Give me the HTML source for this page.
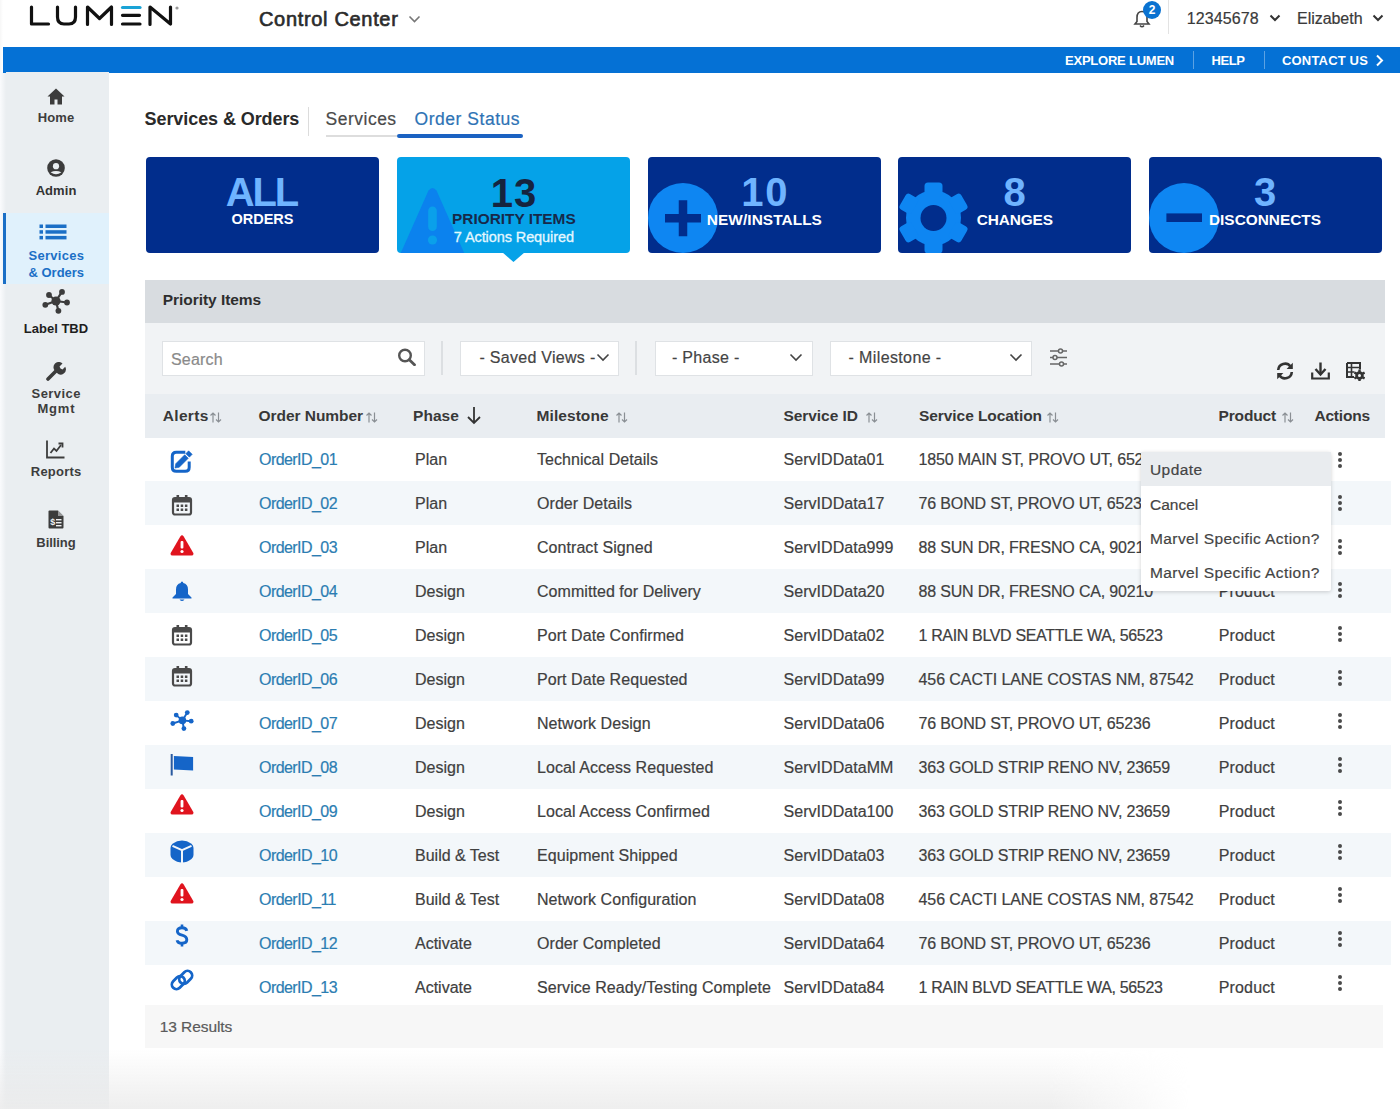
<!DOCTYPE html>
<html><head><meta charset="utf-8"><style>
html,body{margin:0;padding:0;}
body{width:1400px;height:1109px;overflow:hidden;position:relative;background:#fff;font-family:"Liberation Sans",sans-serif;}
.t{position:absolute;white-space:nowrap;line-height:1;-webkit-text-stroke:0.2px currentColor;}
.t.b{-webkit-text-stroke:0;}
.r{position:absolute;}
</style></head><body>
<div class="r" style="left:0.00px;top:0.00px;width:1400.00px;height:1109.00px;background:#ffffff;"></div>
<div class="r" style="left:0.00px;top:72.00px;width:6.00px;height:1037.00px;background:linear-gradient(90deg,#fafbfd,#eaeef1);"></div>
<div class="r" style="left:0.00px;top:0.00px;width:3.00px;height:72.00px;background:linear-gradient(90deg,#f7f7f7,#ffffff);"></div>
<svg class="r" style="left:0.00px;top:0.00px;" width="190.00" height="40.00" viewBox="0 0 190 40"><g fill="none" stroke="#111" stroke-width="3.2" stroke-linecap="round" stroke-linejoin="round">
<path d="M31.5 7 V24 H48.5"/>
<path d="M57.5 7 V17 Q57.5 24 64 24 H69 Q75.5 24 75.5 17 V7"/>
<path d="M87.5 24.5 V7 L99.5 18.5 L111.5 7 V24.5"/>
<path d="M122.5 15.3 H139.5 M122.5 24 H140"/>
<path d="M150 24.5 V7 L170.5 24 V7"/>
</g>
<path d="M122.5 7.5 H140" stroke="#1aa3d6" stroke-width="3.2" stroke-linecap="round"/>
<circle cx="177" cy="8" r="1.6" fill="#999"/></svg>
<div class="t" style="left:259.00px;top:9.47px;font-size:20.00px;letter-spacing:0.674px;color:#2b2b2b;-webkit-text-stroke:0.65px #2b2b2b;">Control Center</div>
<svg class="r" style="left:408.00px;top:15.00px;" width="13.00" height="9.00" viewBox="0 0 13 9"><path d="M1.5 1.5 L6.5 6.5 L11.5 1.5" fill="none" stroke="#777" stroke-width="1.6"/></svg>
<svg class="r" style="left:1132.00px;top:9.00px;" width="20.00" height="20.00" viewBox="0 0 20 20"><path d="M10 2.5 C6.5 2.5 5 5.5 5 8.5 V12.5 L3 15 H17 L15 12.5 V8.5 C15 5.5 13.5 2.5 10 2.5 Z" fill="none" stroke="#444" stroke-width="1.6"/><path d="M8 16.5 Q10 19 12 16.5" fill="none" stroke="#444" stroke-width="1.5"/></svg>
<div class="r" style="left:1143px;top:1px;width:18px;height:18px;border-radius:50%;background:#0a72d1;"></div>
<div class="t b" style="left:1148.66px;top:4.34px;font-size:12.00px;font-weight:bold;letter-spacing:0.000px;color:#fff;">2</div>
<div class="r" style="left:1167.50px;top:0.00px;width:1.00px;height:34.00px;background:#e3e3e3;"></div>
<div class="t" style="left:1186.80px;top:11.06px;font-size:16.00px;letter-spacing:0.101px;color:#3a3a3a;">12345678</div>
<svg class="r" style="left:1269.00px;top:14.00px;" width="12.00" height="9.00" viewBox="0 0 12 9"><path d="M1.5 1.5 L6 6 L10.5 1.5" fill="none" stroke="#333" stroke-width="2"/></svg>
<div class="t" style="left:1297.00px;top:11.06px;font-size:16.00px;letter-spacing:-0.036px;color:#3a3a3a;">Elizabeth</div>
<svg class="r" style="left:1372.00px;top:14.00px;" width="12.00" height="9.00" viewBox="0 0 12 9"><path d="M1.5 1.5 L6 6 L10.5 1.5" fill="none" stroke="#333" stroke-width="2"/></svg>
<div class="r" style="left:3.00px;top:46.50px;width:1397.00px;height:26.00px;background:#0571d5;"></div>
<div class="t b" style="left:1065.00px;top:54.40px;font-size:13.00px;font-weight:bold;letter-spacing:-0.227px;color:#ffffff;">EXPLORE LUMEN</div>
<div class="r" style="left:1193.00px;top:51.00px;width:1.00px;height:17.50px;background:rgba(255,255,255,0.35);"></div>
<div class="t b" style="left:1211.40px;top:54.40px;font-size:13.00px;font-weight:bold;letter-spacing:-0.368px;color:#ffffff;">HELP</div>
<div class="r" style="left:1264.00px;top:51.00px;width:1.00px;height:17.50px;background:rgba(255,255,255,0.35);"></div>
<div class="t b" style="left:1282.00px;top:54.40px;font-size:13.00px;font-weight:bold;letter-spacing:0.175px;color:#ffffff;">CONTACT US</div>
<svg class="r" style="left:1375.00px;top:54.00px;" width="9.00" height="13.00" viewBox="0 0 9 13"><path d="M2 1.5 L7 6.5 L2 11.5" fill="none" stroke="#fff" stroke-width="2"/></svg>
<div class="r" style="left:6.00px;top:72.00px;width:103.00px;height:1037.00px;background:#eaeef1;"></div>
<div class="r" style="left:3.00px;top:213.00px;width:106.00px;height:71.00px;background:#e0f1fc;"></div>
<div class="r" style="left:3.00px;top:213.00px;width:3.00px;height:71.00px;background:#1b6fc6;"></div>
<svg class="r" style="left:47.00px;top:88.00px;" width="18.00" height="17.00" viewBox="0 0 18 17"><path d="M9 0.5 L0.5 8.5 H3 V16.5 H7.5 V11.5 H10.5 V16.5 H15 V8.5 H17.5 Z" fill="#3c3c3c"/></svg>
<div class="t b" style="left:37.84px;top:111.00px;font-size:13.00px;font-weight:bold;letter-spacing:0.070px;color:#3d3d3d;">Home</div>
<svg class="r" style="left:47.00px;top:159.00px;" width="18.00" height="18.00" viewBox="0 0 18 18"><circle cx="9" cy="9" r="8.8" fill="#3c3c3c"/><circle cx="9" cy="7.2" r="3.1" fill="#eaeef1"/><path d="M3.6 13.2 Q9 17.2 14.4 13.2 Q9 10.8 3.6 13.2 Z" fill="#eaeef1"/></svg>
<div class="t b" style="left:35.68px;top:184.00px;font-size:13.00px;font-weight:bold;letter-spacing:0.052px;color:#333;">Admin</div>
<svg class="r" style="left:39.00px;top:224.00px;" width="28.00" height="16.00" viewBox="0 0 28 16"><g fill="#1b6fc6"><rect x="0.5" y="0.5" width="3.5" height="3.5"/><rect x="0.5" y="6.2" width="3.5" height="3.5"/><rect x="0.5" y="11.9" width="3.5" height="3.5"/><rect x="6.5" y="0.5" width="21" height="3.5"/><rect x="6.5" y="6.2" width="21" height="3.5"/><rect x="6.5" y="11.9" width="21" height="3.5"/></g></svg>
<div class="t b" style="left:28.54px;top:248.60px;font-size:13.00px;font-weight:bold;letter-spacing:0.288px;color:#1b6fc6;">Services</div>
<div class="t b" style="left:28.50px;top:265.70px;font-size:13.00px;font-weight:bold;letter-spacing:-0.004px;color:#1b6fc6;">&amp; Orders</div>
<svg class="r" style="left:42.00px;top:289.00px;" width="28.00" height="25.00" viewBox="0 0 28 25"><g stroke="#3c3c3c" stroke-width="2.2" fill="#3c3c3c"><line x1="14" y1="12" x2="7" y2="6"/><line x1="14" y1="12" x2="20" y2="2.7"/><line x1="14" y1="12" x2="3.3" y2="15.8"/><line x1="14" y1="12" x2="25" y2="13.5"/><line x1="14" y1="12" x2="16.4" y2="22"/></g><g fill="#3c3c3c"><circle cx="14" cy="12" r="4.6"/><circle cx="7" cy="6" r="2.9"/><circle cx="20" cy="2.9" r="2.9"/><circle cx="3.3" cy="15.8" r="2.9"/><circle cx="25" cy="13.5" r="2.9"/><circle cx="16.4" cy="21.8" r="2.9"/></g></svg>
<div class="t b" style="left:23.85px;top:322.00px;font-size:13.00px;font-weight:bold;letter-spacing:0.002px;color:#1e1e1e;">Label TBD</div>
<svg class="r" style="left:46.00px;top:362.00px;" width="20.00" height="19.00" viewBox="0 0 20 19"><path d="M2 17 L10.5 8.5" stroke="#3c3c3c" stroke-width="3.6" stroke-linecap="round"/><path d="M9 9 A5.2 5.2 0 0 1 16.5 1.5 L13.5 4.5 L14.5 6.5 L16.5 7.5 L19.2 4.8 A5.2 5.2 0 0 1 11 11 Z" fill="#3c3c3c"/></svg>
<div class="t b" style="left:31.61px;top:387.00px;font-size:13.00px;font-weight:bold;letter-spacing:0.420px;color:#3d3d3d;">Service</div>
<div class="t b" style="left:37.46px;top:402.00px;font-size:13.00px;font-weight:bold;letter-spacing:0.810px;color:#3d3d3d;">Mgmt</div>
<svg class="r" style="left:46.00px;top:440.00px;" width="19.00" height="19.00" viewBox="0 0 19 19"><path d="M1 0.5 V17.5 H18.5" fill="none" stroke="#3c3c3c" stroke-width="1.8"/><path d="M4.5 13 L8 8.5 L10.5 11 L15 5" fill="none" stroke="#3c3c3c" stroke-width="1.8"/><path d="M12.5 3.5 H16.5 V7.5" fill="none" stroke="#3c3c3c" stroke-width="1.8"/></svg>
<div class="t b" style="left:30.85px;top:465.00px;font-size:13.00px;font-weight:bold;letter-spacing:0.197px;color:#3d3d3d;">Reports</div>
<svg class="r" style="left:48.00px;top:510.00px;" width="16.00" height="19.00" viewBox="0 0 16 19"><path d="M0.5 1.5 Q0.5 0.5 1.5 0.5 H10 L15.5 6 V17.5 Q15.5 18.5 14.5 18.5 H1.5 Q0.5 18.5 0.5 17.5 Z" fill="#3c3c3c"/><path d="M10 0.5 V6 H15.5" fill="#eef0f2" opacity="0.5"/><text x="4.8" y="14.5" font-size="9" font-weight="bold" fill="#eef0f2" font-family="Liberation Sans" text-anchor="middle">$</text><rect x="8" y="9" width="5.5" height="1.4" fill="#eef0f2"/><rect x="8" y="12" width="5.5" height="1.4" fill="#eef0f2"/><rect x="8" y="15" width="5.5" height="1.4" fill="#eef0f2"/></svg>
<div class="t b" style="left:36.36px;top:535.60px;font-size:13.00px;font-weight:bold;letter-spacing:-0.074px;color:#3d3d3d;">Billing</div>
<div class="t b" style="left:144.60px;top:110.26px;font-size:18.00px;font-weight:bold;letter-spacing:-0.082px;color:#2a2a2a;">Services &amp; Orders</div>
<div class="r" style="left:307.50px;top:107.00px;width:1.00px;height:29.00px;background:#dcdcdc;"></div>
<div class="t" style="left:325.60px;top:110.69px;font-size:17.50px;letter-spacing:0.487px;color:#4a4a4a;">Services</div>
<div class="t" style="left:414.60px;top:110.69px;font-size:17.50px;letter-spacing:0.524px;color:#2d73b5;">Order Status</div>
<div class="r" style="left:325.50px;top:134.50px;width:71.50px;height:2.50px;background:#dddddd;"></div>
<div class="r" style="left:397.00px;top:134.00px;width:125.50px;height:3.50px;background:#1b62c2;border-radius:2px;"></div>
<div class="r" style="left:146px;top:157px;width:233px;height:96px;border-radius:4px;background:#012d8c;overflow:hidden;">
</div>
<div class="t b" style="left:225.74px;top:172.14px;font-size:40.00px;font-weight:bold;letter-spacing:-2.119px;color:#6fb4ff;">ALL</div>
<div class="t b" style="left:231.50px;top:211.93px;font-size:14.50px;font-weight:bold;letter-spacing:-0.006px;color:#ffffff;">ORDERS</div>
<div class="r" style="left:397px;top:157px;width:233px;height:96px;border-radius:4px;background:#05a2e8;overflow:hidden;">
<svg style="position:absolute;left:0;top:30px" width="72" height="70" viewBox="0 0 72 70"><path d="M31.5 3.5 Q35.5 -1.5 39.5 3.5 L69 70 H2 Z" fill="#0b82ee"/><rect x="31.2" y="19.5" width="8.6" height="24.5" rx="4.3" fill="#0aa0ea"/><circle cx="35.5" cy="53" r="4.6" fill="#0aa0ea"/></svg>
</div>
<svg class="r" style="left:502.00px;top:252.00px;" width="23.00" height="10.00" viewBox="0 0 23 10"><path d="M0 0 H23 L11.5 10 Z" fill="#05a2e8"/></svg>
<div class="t b" style="left:490.63px;top:173.14px;font-size:40.00px;font-weight:bold;letter-spacing:1.253px;color:#16243f;">13</div>
<div class="t b" style="left:452.05px;top:210.96px;font-size:15.40px;font-weight:bold;letter-spacing:-0.006px;color:#17294a;">PRIORITY ITEMS</div>
<div class="t" style="left:453.85px;top:230.23px;font-size:14.50px;letter-spacing:-0.095px;color:#e4f7ff;-webkit-text-stroke:0.3px #e4f7ff;">7 Actions Required</div>
<div class="r" style="left:648px;top:157px;width:233px;height:96px;border-radius:4px;background:#012d8c;overflow:hidden;">
<svg style="position:absolute;left:0;top:0" width="80" height="96" viewBox="0 0 80 96"><circle cx="35" cy="61" r="35" fill="#0e86f2"/><rect x="17" y="57" width="36" height="8.5" fill="#012d8c"/><rect x="30.75" y="43.25" width="8.5" height="36" fill="#012d8c"/></svg>
</div>
<div class="t b" style="left:741.18px;top:172.14px;font-size:40.00px;font-weight:bold;letter-spacing:1.753px;color:#6fb4ff;">10</div>
<div class="t b" style="left:706.84px;top:211.56px;font-size:15.40px;font-weight:bold;letter-spacing:0.071px;color:#ffffff;">NEW/INSTALLS</div>
<div class="r" style="left:898px;top:157px;width:233px;height:96px;border-radius:4px;background:#012d8c;overflow:hidden;">
<svg style="position:absolute;left:0;top:0" width="80" height="96" viewBox="0 0 80 96"><g fill="#0e86f2"><circle cx="35.5" cy="61" r="27.5"/><rect x="26.50" y="25.50" width="18" height="14" rx="3.5" transform="rotate(0 35.50 61.00)"/><rect x="26.50" y="25.50" width="18" height="14" rx="3.5" transform="rotate(60 35.50 61.00)"/><rect x="26.50" y="25.50" width="18" height="14" rx="3.5" transform="rotate(120 35.50 61.00)"/><rect x="26.50" y="25.50" width="18" height="14" rx="3.5" transform="rotate(180 35.50 61.00)"/><rect x="26.50" y="25.50" width="18" height="14" rx="3.5" transform="rotate(240 35.50 61.00)"/><rect x="26.50" y="25.50" width="18" height="14" rx="3.5" transform="rotate(300 35.50 61.00)"/></g><circle cx="35.5" cy="61" r="13" fill="#012d8c"/></svg>
</div>
<div class="t b" style="left:1003.48px;top:172.14px;font-size:40.00px;font-weight:bold;letter-spacing:0.000px;color:#6fb4ff;">8</div>
<div class="t b" style="left:976.74px;top:211.56px;font-size:15.40px;font-weight:bold;letter-spacing:-0.116px;color:#ffffff;">CHANGES</div>
<div class="r" style="left:1149px;top:157px;width:233px;height:96px;border-radius:4px;background:#012d8c;overflow:hidden;">
<svg style="position:absolute;left:0;top:0" width="80" height="96" viewBox="0 0 80 96"><circle cx="35" cy="61" r="35" fill="#0e86f2"/><rect x="17.4" y="56.4" width="35.6" height="8.6" fill="#012d8c"/></svg>
</div>
<div class="t b" style="left:1254.08px;top:172.14px;font-size:40.00px;font-weight:bold;letter-spacing:0.000px;color:#6fb4ff;">3</div>
<div class="t b" style="left:1209.00px;top:211.96px;font-size:15.40px;font-weight:bold;letter-spacing:-0.008px;color:#ffffff;">DISCONNECTS</div>
<div class="r" style="left:144.50px;top:280.00px;width:1240.00px;height:43.00px;background:#d8dce0;"></div>
<div class="t b" style="left:162.70px;top:292.38px;font-size:15.50px;font-weight:bold;letter-spacing:-0.040px;color:#2e2e2e;font-weight:600;">Priority Items</div>
<div class="r" style="left:144.50px;top:323.00px;width:1240.00px;height:71.00px;background:#f1f3f5;"></div>
<div class="r" style="left:161.50px;top:340.50px;width:263.50px;height:35.50px;background:#ffffff;box-sizing:border-box;border:1px solid #dfe2e5;"></div>
<div class="t" style="left:170.90px;top:352.46px;font-size:16.00px;letter-spacing:0.217px;color:#8a8a8a;">Search</div>
<svg class="r" style="left:397.00px;top:348.00px;" width="20.00" height="18.00" viewBox="0 0 20 18"><circle cx="8" cy="7.5" r="5.8" fill="none" stroke="#555" stroke-width="2.4"/><path d="M12.3 11.8 L17.5 16.8" stroke="#555" stroke-width="2.8" stroke-linecap="round"/></svg>
<div class="r" style="left:441.00px;top:341.00px;width:1.50px;height:34.00px;background:#dcdfe2;"></div>
<div class="r" style="left:460.00px;top:340.50px;width:159.00px;height:35.00px;background:#ffffff;box-sizing:border-box;border:1px solid #dfe2e5;"></div>
<div class="t" style="left:479.50px;top:349.96px;font-size:16.00px;letter-spacing:0.283px;color:#444;">- Saved Views -</div>
<svg class="r" style="left:595.50px;top:353.00px;" width="14.00" height="9.00" viewBox="0 0 14 9"><path d="M1.5 1.5 L7 7 L12.5 1.5" fill="none" stroke="#444" stroke-width="1.6"/></svg>
<div class="r" style="left:635.00px;top:341.00px;width:1.50px;height:34.00px;background:#dcdfe2;"></div>
<div class="r" style="left:654.50px;top:340.50px;width:158.00px;height:35.00px;background:#ffffff;box-sizing:border-box;border:1px solid #dfe2e5;"></div>
<div class="t" style="left:672.00px;top:349.96px;font-size:16.00px;letter-spacing:0.287px;color:#444;">- Phase -</div>
<svg class="r" style="left:789.00px;top:353.00px;" width="14.00" height="9.00" viewBox="0 0 14 9"><path d="M1.5 1.5 L7 7 L12.5 1.5" fill="none" stroke="#444" stroke-width="1.6"/></svg>
<div class="r" style="left:830.00px;top:340.50px;width:202.00px;height:35.00px;background:#ffffff;box-sizing:border-box;border:1px solid #dfe2e5;"></div>
<div class="t" style="left:848.50px;top:349.96px;font-size:16.00px;letter-spacing:0.383px;color:#444;">- Milestone -</div>
<svg class="r" style="left:1008.70px;top:353.00px;" width="14.00" height="9.00" viewBox="0 0 14 9"><path d="M1.5 1.5 L7 7 L12.5 1.5" fill="none" stroke="#444" stroke-width="1.6"/></svg>
<svg class="r" style="left:1049.00px;top:348.00px;" width="19.00" height="19.00" viewBox="0 0 19 19"><g stroke="#666" stroke-width="1.5" fill="none"><line x1="1" y1="3" x2="18" y2="3"/><line x1="1" y1="9.5" x2="18" y2="9.5"/><line x1="1" y1="16" x2="18" y2="16"/></g><g fill="#f1f3f5" stroke="#666" stroke-width="1.5"><circle cx="11.5" cy="3" r="2"/><circle cx="6" cy="9.5" r="2"/><circle cx="12.5" cy="16" r="2"/></g></svg>
<svg class="r" style="left:1275.00px;top:362.00px;" width="20.00" height="18.00" viewBox="0 0 20 18"><path d="M3.2 8 A6.8 6.8 0 0 1 15.5 4.5" fill="none" stroke="#333" stroke-width="2.6"/><path d="M17.8 0.8 V7 H11.6 Z" fill="#333"/><path d="M16.8 10 A6.8 6.8 0 0 1 4.5 13.5" fill="none" stroke="#333" stroke-width="2.6"/><path d="M2.2 17.2 V11 H8.4 Z" fill="#333"/></svg>
<svg class="r" style="left:1311.00px;top:362.00px;" width="19.00" height="18.00" viewBox="0 0 19 18"><path d="M9.5 0.5 V11" stroke="#333" stroke-width="2.4"/><path d="M4.5 7 L9.5 12.5 L14.5 7" fill="none" stroke="#333" stroke-width="2.4"/><path d="M1.2 10.5 V16.5 H17.8 V10.5" fill="none" stroke="#333" stroke-width="2.2"/></svg>
<svg class="r" style="left:1346.00px;top:362.00px;" width="19.00" height="19.00" viewBox="0 0 19 19"><path d="M1 1 H14 V7.5 M1 1 V15 H8" fill="none" stroke="#333" stroke-width="2"/><path d="M1 5.5 H14 M1 10 H8.5 M5.5 1 V15" stroke="#333" stroke-width="1.6"/><g fill="#333"><circle cx="13.5" cy="13.5" r="4.2"/><rect x="12.3" y="7.6" width="2.4" height="3" transform="rotate(0 13.5 13.5)"/><rect x="12.3" y="7.6" width="2.4" height="3" transform="rotate(60 13.5 13.5)"/><rect x="12.3" y="7.6" width="2.4" height="3" transform="rotate(120 13.5 13.5)"/><rect x="12.3" y="7.6" width="2.4" height="3" transform="rotate(180 13.5 13.5)"/><rect x="12.3" y="7.6" width="2.4" height="3" transform="rotate(240 13.5 13.5)"/><rect x="12.3" y="7.6" width="2.4" height="3" transform="rotate(300 13.5 13.5)"/></g><circle cx="13.5" cy="13.5" r="1.5" fill="#f1f3f5"/></svg>
<div class="r" style="left:144.50px;top:394.00px;width:1240.00px;height:43.50px;background:#e9edf1;"></div>
<div class="t b" style="left:162.70px;top:407.88px;font-size:15.50px;font-weight:bold;letter-spacing:0.344px;color:#383838;font-weight:600;">Alerts</div>
<svg class="r" style="left:208.50px;top:412.00px;" width="14.00" height="11.00" viewBox="0 0 14 11"><g fill="none" stroke="#8a8f94" stroke-width="1.2"><path d="M4 10.5 V1 M1.5 3.5 L4 1 L6.5 3.5"/><path d="M9.5 0.5 V10 M7 7.5 L9.5 10 L12 7.5"/></g></svg>
<div class="t b" style="left:258.60px;top:407.88px;font-size:15.50px;font-weight:bold;letter-spacing:-0.057px;color:#383838;">Order Number</div>
<svg class="r" style="left:365.00px;top:412.00px;" width="14.00" height="11.00" viewBox="0 0 14 11"><g fill="none" stroke="#8a8f94" stroke-width="1.2"><path d="M4 10.5 V1 M1.5 3.5 L4 1 L6.5 3.5"/><path d="M9.5 0.5 V10 M7 7.5 L9.5 10 L12 7.5"/></g></svg>
<div class="t b" style="left:413.00px;top:407.88px;font-size:15.50px;font-weight:bold;letter-spacing:0.066px;color:#383838;">Phase</div>
<svg class="r" style="left:466.00px;top:406.00px;" width="16.00" height="19.00" viewBox="0 0 16 19"><path d="M8 1 V17 M2 11 L8 17 L14 11" fill="none" stroke="#333" stroke-width="1.8"/></svg>
<div class="t b" style="left:536.60px;top:407.88px;font-size:15.50px;font-weight:bold;letter-spacing:0.057px;color:#383838;">Milestone</div>
<svg class="r" style="left:615.00px;top:412.00px;" width="14.00" height="11.00" viewBox="0 0 14 11"><g fill="none" stroke="#8a8f94" stroke-width="1.2"><path d="M4 10.5 V1 M1.5 3.5 L4 1 L6.5 3.5"/><path d="M9.5 0.5 V10 M7 7.5 L9.5 10 L12 7.5"/></g></svg>
<div class="t b" style="left:783.50px;top:407.88px;font-size:15.50px;font-weight:bold;letter-spacing:-0.067px;color:#383838;">Service ID</div>
<svg class="r" style="left:864.50px;top:412.00px;" width="14.00" height="11.00" viewBox="0 0 14 11"><g fill="none" stroke="#8a8f94" stroke-width="1.2"><path d="M4 10.5 V1 M1.5 3.5 L4 1 L6.5 3.5"/><path d="M9.5 0.5 V10 M7 7.5 L9.5 10 L12 7.5"/></g></svg>
<div class="t b" style="left:919.00px;top:407.88px;font-size:15.50px;font-weight:bold;letter-spacing:-0.066px;color:#383838;">Service Location</div>
<svg class="r" style="left:1046.00px;top:412.00px;" width="14.00" height="11.00" viewBox="0 0 14 11"><g fill="none" stroke="#8a8f94" stroke-width="1.2"><path d="M4 10.5 V1 M1.5 3.5 L4 1 L6.5 3.5"/><path d="M9.5 0.5 V10 M7 7.5 L9.5 10 L12 7.5"/></g></svg>
<div class="t b" style="left:1218.50px;top:407.88px;font-size:15.50px;font-weight:bold;letter-spacing:-0.151px;color:#383838;">Product</div>
<svg class="r" style="left:1280.50px;top:412.00px;" width="14.00" height="11.00" viewBox="0 0 14 11"><g fill="none" stroke="#8a8f94" stroke-width="1.2"><path d="M4 10.5 V1 M1.5 3.5 L4 1 L6.5 3.5"/><path d="M9.5 0.5 V10 M7 7.5 L9.5 10 L12 7.5"/></g></svg>
<div class="t b" style="left:1314.40px;top:407.88px;font-size:15.50px;font-weight:bold;letter-spacing:-0.177px;color:#383838;">Actions</div>
<div class="r" style="left:169.5px;top:450.0px;width:24px;height:23px"><svg width="24" height="23" viewBox="0 0 24 23"><path d="M15.3 2.3 H6.3 Q2.3 2.3 2.3 6.3 V17.2 Q2.3 21.2 6.3 21.2 H15.2 Q19.2 21.2 19.2 17.2 V11.4" fill="none" stroke="#1565c8" stroke-width="3"/><path d="M5 18 L5.73 13.73 L14.73 4.73 L18.27 8.27 L9.27 17.27 Z M15.83 3.63 L18.63 0.83 L22.17 4.37 L19.37 7.17 Z" fill="#1565c8" stroke="#1565c8" stroke-width="0.6" stroke-linejoin="round"/></svg></div>
<div class="t" style="left:259.00px;top:452.26px;font-size:16.00px;letter-spacing:-0.560px;color:#2b7db2;">OrderID_01</div>
<div class="t" style="left:415.00px;top:452.26px;font-size:16.00px;letter-spacing:0.000px;color:#404040;">Plan</div>
<div class="t" style="left:537.00px;top:452.26px;font-size:16.00px;letter-spacing:0.053px;color:#404040;">Technical Details</div>
<div class="t" style="left:783.50px;top:452.26px;font-size:16.00px;letter-spacing:0.042px;color:#404040;">ServIDData01</div>
<div class="t" style="left:918.50px;top:452.26px;font-size:16.00px;letter-spacing:-0.170px;color:#404040;">1850 MAIN ST, PROVO UT, 65236</div>
<div class="t" style="left:1218.70px;top:452.26px;font-size:16.00px;letter-spacing:0.165px;color:#404040;">Product</div>
<svg class="r" style="left:1337px;top:450.6px" width="6" height="18" viewBox="0 0 6 18"><g fill="#4a4a4a"><circle cx="3" cy="3" r="2"/><circle cx="3" cy="9" r="2"/><circle cx="3" cy="15" r="2"/></g></svg>
<div class="r" style="left:144.50px;top:481.00px;width:1246.00px;height:44.00px;background:#f3f7fa;"></div>
<div class="r" style="left:170.5px;top:494.0px;width:22px;height:22px"><svg width="22" height="22" viewBox="0 0 22 22"><rect x="2" y="4" width="18" height="16.5" rx="2" fill="none" stroke="#4a4a4a" stroke-width="2.2"/><rect x="2" y="4" width="18" height="4.5" fill="#4a4a4a"/><rect x="5.5" y="1" width="2.6" height="5" fill="#4a4a4a"/><rect x="13.9" y="1" width="2.6" height="5" fill="#4a4a4a"/><g fill="#4a4a4a"><rect x="5.5" y="10.5" width="2.5" height="2.5"/><rect x="9.7" y="10.5" width="2.5" height="2.5"/><rect x="13.9" y="10.5" width="2.5" height="2.5"/><rect x="5.5" y="14.5" width="2.5" height="2.5"/><rect x="9.7" y="14.5" width="2.5" height="2.5"/><rect x="13.9" y="14.5" width="2.5" height="2.5"/></g></svg></div>
<div class="t" style="left:259.00px;top:496.26px;font-size:16.00px;letter-spacing:-0.560px;color:#2b7db2;">OrderID_02</div>
<div class="t" style="left:415.00px;top:496.26px;font-size:16.00px;letter-spacing:0.000px;color:#404040;">Plan</div>
<div class="t" style="left:537.00px;top:496.26px;font-size:16.00px;letter-spacing:0.054px;color:#404040;">Order Details</div>
<div class="t" style="left:783.50px;top:496.26px;font-size:16.00px;letter-spacing:0.042px;color:#404040;">ServIDData17</div>
<div class="t" style="left:918.50px;top:496.26px;font-size:16.00px;letter-spacing:-0.135px;color:#404040;">76 BOND ST, PROVO UT, 65236</div>
<div class="t" style="left:1218.70px;top:496.26px;font-size:16.00px;letter-spacing:0.165px;color:#404040;">Product</div>
<svg class="r" style="left:1337px;top:494.2px" width="6" height="18" viewBox="0 0 6 18"><g fill="#4a4a4a"><circle cx="3" cy="3" r="2"/><circle cx="3" cy="9" r="2"/><circle cx="3" cy="15" r="2"/></g></svg>
<div class="r" style="left:169.5px;top:534.5px;width:24px;height:21px"><svg width="24" height="21" viewBox="0 0 24 21"><path d="M10.3 1.5 Q12 -1 13.7 1.5 L23.3 18 Q24 20.5 21.5 20.5 H2.5 Q0 20.5 0.7 18 Z" fill="#e0141e"/><rect x="10.6" y="6" width="2.8" height="7.5" rx="1" fill="#fff"/><circle cx="12" cy="16.5" r="1.6" fill="#fff"/></svg></div>
<div class="t" style="left:259.00px;top:540.26px;font-size:16.00px;letter-spacing:-0.560px;color:#2b7db2;">OrderID_03</div>
<div class="t" style="left:415.00px;top:540.26px;font-size:16.00px;letter-spacing:0.000px;color:#404040;">Plan</div>
<div class="t" style="left:537.00px;top:540.26px;font-size:16.00px;letter-spacing:0.057px;color:#404040;">Contract Signed</div>
<div class="t" style="left:783.50px;top:540.26px;font-size:16.00px;letter-spacing:0.042px;color:#404040;">ServIDData999</div>
<div class="t" style="left:918.50px;top:540.26px;font-size:16.00px;letter-spacing:-0.177px;color:#404040;">88 SUN DR, FRESNO CA, 90210</div>
<div class="t" style="left:1218.70px;top:540.26px;font-size:16.00px;letter-spacing:0.165px;color:#404040;">Product</div>
<svg class="r" style="left:1337px;top:537.8px" width="6" height="18" viewBox="0 0 6 18"><g fill="#4a4a4a"><circle cx="3" cy="3" r="2"/><circle cx="3" cy="9" r="2"/><circle cx="3" cy="15" r="2"/></g></svg>
<div class="r" style="left:144.50px;top:569.00px;width:1246.00px;height:44.00px;background:#f3f7fa;"></div>
<div class="r" style="left:170.5px;top:579.5px;width:22px;height:22px"><svg width="22" height="22" viewBox="0 0 22 22"><path d="M11 1.5 Q12.3 1.5 12.3 3 Q17 4 17 9.5 V14 L20.5 17.5 V18.5 H1.5 V17.5 L5 14 V9.5 Q5 4 9.7 3 Q9.7 1.5 11 1.5 Z" fill="#1565c8"/><path d="M8.5 19.5 Q11 22.5 13.5 19.5 Z" fill="#1565c8"/></svg></div>
<div class="t" style="left:259.00px;top:584.26px;font-size:16.00px;letter-spacing:-0.560px;color:#2b7db2;">OrderID_04</div>
<div class="t" style="left:415.00px;top:584.26px;font-size:16.00px;letter-spacing:0.000px;color:#404040;">Design</div>
<div class="t" style="left:537.00px;top:584.26px;font-size:16.00px;letter-spacing:0.055px;color:#404040;">Committed for Delivery</div>
<div class="t" style="left:783.50px;top:584.26px;font-size:16.00px;letter-spacing:0.042px;color:#404040;">ServIDData20</div>
<div class="t" style="left:918.50px;top:584.26px;font-size:16.00px;letter-spacing:-0.177px;color:#404040;">88 SUN DR, FRESNO CA, 90210</div>
<div class="t" style="left:1218.70px;top:584.26px;font-size:16.00px;letter-spacing:0.165px;color:#404040;">Product</div>
<svg class="r" style="left:1337px;top:581.3px" width="6" height="18" viewBox="0 0 6 18"><g fill="#4a4a4a"><circle cx="3" cy="3" r="2"/><circle cx="3" cy="9" r="2"/><circle cx="3" cy="15" r="2"/></g></svg>
<div class="r" style="left:170.5px;top:624.0px;width:22px;height:22px"><svg width="22" height="22" viewBox="0 0 22 22"><rect x="2" y="4" width="18" height="16.5" rx="2" fill="none" stroke="#4a4a4a" stroke-width="2.2"/><rect x="2" y="4" width="18" height="4.5" fill="#4a4a4a"/><rect x="5.5" y="1" width="2.6" height="5" fill="#4a4a4a"/><rect x="13.9" y="1" width="2.6" height="5" fill="#4a4a4a"/><g fill="#4a4a4a"><rect x="5.5" y="10.5" width="2.5" height="2.5"/><rect x="9.7" y="10.5" width="2.5" height="2.5"/><rect x="13.9" y="10.5" width="2.5" height="2.5"/><rect x="5.5" y="14.5" width="2.5" height="2.5"/><rect x="9.7" y="14.5" width="2.5" height="2.5"/><rect x="13.9" y="14.5" width="2.5" height="2.5"/></g></svg></div>
<div class="t" style="left:259.00px;top:628.26px;font-size:16.00px;letter-spacing:-0.560px;color:#2b7db2;">OrderID_05</div>
<div class="t" style="left:415.00px;top:628.26px;font-size:16.00px;letter-spacing:0.000px;color:#404040;">Design</div>
<div class="t" style="left:537.00px;top:628.26px;font-size:16.00px;letter-spacing:0.058px;color:#404040;">Port Date Confirmed</div>
<div class="t" style="left:783.50px;top:628.26px;font-size:16.00px;letter-spacing:0.042px;color:#404040;">ServIDData02</div>
<div class="t" style="left:918.50px;top:628.26px;font-size:16.00px;letter-spacing:-0.346px;color:#404040;">1 RAIN BLVD SEATTLE WA, 56523</div>
<div class="t" style="left:1218.70px;top:628.26px;font-size:16.00px;letter-spacing:0.165px;color:#404040;">Product</div>
<svg class="r" style="left:1337px;top:624.9px" width="6" height="18" viewBox="0 0 6 18"><g fill="#4a4a4a"><circle cx="3" cy="3" r="2"/><circle cx="3" cy="9" r="2"/><circle cx="3" cy="15" r="2"/></g></svg>
<div class="r" style="left:144.50px;top:657.00px;width:1246.00px;height:44.00px;background:#f3f7fa;"></div>
<div class="r" style="left:170.5px;top:664.6px;width:22px;height:22px"><svg width="22" height="22" viewBox="0 0 22 22"><rect x="2" y="4" width="18" height="16.5" rx="2" fill="none" stroke="#4a4a4a" stroke-width="2.2"/><rect x="2" y="4" width="18" height="4.5" fill="#4a4a4a"/><rect x="5.5" y="1" width="2.6" height="5" fill="#4a4a4a"/><rect x="13.9" y="1" width="2.6" height="5" fill="#4a4a4a"/><g fill="#4a4a4a"><rect x="5.5" y="10.5" width="2.5" height="2.5"/><rect x="9.7" y="10.5" width="2.5" height="2.5"/><rect x="13.9" y="10.5" width="2.5" height="2.5"/><rect x="5.5" y="14.5" width="2.5" height="2.5"/><rect x="9.7" y="14.5" width="2.5" height="2.5"/><rect x="13.9" y="14.5" width="2.5" height="2.5"/></g></svg></div>
<div class="t" style="left:259.00px;top:672.26px;font-size:16.00px;letter-spacing:-0.560px;color:#2b7db2;">OrderID_06</div>
<div class="t" style="left:415.00px;top:672.26px;font-size:16.00px;letter-spacing:0.000px;color:#404040;">Design</div>
<div class="t" style="left:537.00px;top:672.26px;font-size:16.00px;letter-spacing:0.059px;color:#404040;">Port Date Requested</div>
<div class="t" style="left:783.50px;top:672.26px;font-size:16.00px;letter-spacing:0.042px;color:#404040;">ServIDData99</div>
<div class="t" style="left:918.50px;top:672.26px;font-size:16.00px;letter-spacing:-0.070px;color:#404040;">456 CACTI LANE COSTAS NM, 87542</div>
<div class="t" style="left:1218.70px;top:672.26px;font-size:16.00px;letter-spacing:0.165px;color:#404040;">Product</div>
<svg class="r" style="left:1337px;top:668.5px" width="6" height="18" viewBox="0 0 6 18"><g fill="#4a4a4a"><circle cx="3" cy="3" r="2"/><circle cx="3" cy="9" r="2"/><circle cx="3" cy="15" r="2"/></g></svg>
<div class="r" style="left:168.5px;top:709.5px;width:26px;height:21px"><svg width="26" height="21" viewBox="0 0 26 21"><g stroke="#1565c8" stroke-width="1.9"><line x1="13.4" y1="10.4" x2="7.2" y2="5.1"/><line x1="13.4" y1="10.4" x2="18.3" y2="2.6"/><line x1="13.4" y1="10.4" x2="3.8" y2="13.5"/><line x1="13.4" y1="10.4" x2="22.2" y2="11.2"/><line x1="13.4" y1="10.4" x2="14.9" y2="19"/></g><g fill="#1565c8"><circle cx="13.4" cy="10.4" r="3.8"/><circle cx="7.2" cy="5.1" r="2.4"/><circle cx="18.3" cy="2.6" r="2.4"/><circle cx="3.8" cy="13.5" r="2.4"/><circle cx="22.2" cy="11.2" r="2.4"/><circle cx="14.9" cy="18.6" r="2.4"/></g></svg></div>
<div class="t" style="left:259.00px;top:716.26px;font-size:16.00px;letter-spacing:-0.560px;color:#2b7db2;">OrderID_07</div>
<div class="t" style="left:415.00px;top:716.26px;font-size:16.00px;letter-spacing:0.000px;color:#404040;">Design</div>
<div class="t" style="left:537.00px;top:716.26px;font-size:16.00px;letter-spacing:0.060px;color:#404040;">Network Design</div>
<div class="t" style="left:783.50px;top:716.26px;font-size:16.00px;letter-spacing:0.042px;color:#404040;">ServIDData06</div>
<div class="t" style="left:918.50px;top:716.26px;font-size:16.00px;letter-spacing:-0.135px;color:#404040;">76 BOND ST, PROVO UT, 65236</div>
<div class="t" style="left:1218.70px;top:716.26px;font-size:16.00px;letter-spacing:0.165px;color:#404040;">Product</div>
<svg class="r" style="left:1337px;top:712.1px" width="6" height="18" viewBox="0 0 6 18"><g fill="#4a4a4a"><circle cx="3" cy="3" r="2"/><circle cx="3" cy="9" r="2"/><circle cx="3" cy="15" r="2"/></g></svg>
<div class="r" style="left:144.50px;top:745.00px;width:1246.00px;height:44.00px;background:#f3f7fa;"></div>
<div class="r" style="left:169.5px;top:754.0px;width:24px;height:22px"><svg width="24" height="22" viewBox="0 0 24 22"><rect x="0.7" y="0" width="2" height="21.5" fill="#2a5aa0"/><path d="M3.9 2 L23.1 3 V16.5 L3.9 15.5 Z" fill="#1565c8"/></svg></div>
<div class="t" style="left:259.00px;top:760.26px;font-size:16.00px;letter-spacing:-0.560px;color:#2b7db2;">OrderID_08</div>
<div class="t" style="left:415.00px;top:760.26px;font-size:16.00px;letter-spacing:0.000px;color:#404040;">Design</div>
<div class="t" style="left:537.00px;top:760.26px;font-size:16.00px;letter-spacing:0.060px;color:#404040;">Local Access Requested</div>
<div class="t" style="left:783.50px;top:760.26px;font-size:16.00px;letter-spacing:0.045px;color:#404040;">ServIDDataMM</div>
<div class="t" style="left:918.50px;top:760.26px;font-size:16.00px;letter-spacing:-0.191px;color:#404040;">363 GOLD STRIP RENO NV, 23659</div>
<div class="t" style="left:1218.70px;top:760.26px;font-size:16.00px;letter-spacing:0.165px;color:#404040;">Product</div>
<svg class="r" style="left:1337px;top:755.7px" width="6" height="18" viewBox="0 0 6 18"><g fill="#4a4a4a"><circle cx="3" cy="3" r="2"/><circle cx="3" cy="9" r="2"/><circle cx="3" cy="15" r="2"/></g></svg>
<div class="r" style="left:169.5px;top:794.3px;width:24px;height:21px"><svg width="24" height="21" viewBox="0 0 24 21"><path d="M10.3 1.5 Q12 -1 13.7 1.5 L23.3 18 Q24 20.5 21.5 20.5 H2.5 Q0 20.5 0.7 18 Z" fill="#e0141e"/><rect x="10.6" y="6" width="2.8" height="7.5" rx="1" fill="#fff"/><circle cx="12" cy="16.5" r="1.6" fill="#fff"/></svg></div>
<div class="t" style="left:259.00px;top:804.26px;font-size:16.00px;letter-spacing:-0.560px;color:#2b7db2;">OrderID_09</div>
<div class="t" style="left:415.00px;top:804.26px;font-size:16.00px;letter-spacing:0.000px;color:#404040;">Design</div>
<div class="t" style="left:537.00px;top:804.26px;font-size:16.00px;letter-spacing:0.058px;color:#404040;">Local Access Confirmed</div>
<div class="t" style="left:783.50px;top:804.26px;font-size:16.00px;letter-spacing:0.042px;color:#404040;">ServIDData100</div>
<div class="t" style="left:918.50px;top:804.26px;font-size:16.00px;letter-spacing:-0.191px;color:#404040;">363 GOLD STRIP RENO NV, 23659</div>
<div class="t" style="left:1218.70px;top:804.26px;font-size:16.00px;letter-spacing:0.165px;color:#404040;">Product</div>
<svg class="r" style="left:1337px;top:799.2px" width="6" height="18" viewBox="0 0 6 18"><g fill="#4a4a4a"><circle cx="3" cy="3" r="2"/><circle cx="3" cy="9" r="2"/><circle cx="3" cy="15" r="2"/></g></svg>
<div class="r" style="left:144.50px;top:833.00px;width:1246.00px;height:44.00px;background:#f3f7fa;"></div>
<div class="r" style="left:169.5px;top:839.5px;width:24px;height:23px"><svg width="24" height="23" viewBox="0 0 24 23"><path d="M12 0.5 Q17 0.5 21.5 3.8 Q23.5 5.5 23.5 8 V15 Q23.5 17.5 21.5 19 Q17 22.5 12 22.5 Q7 22.5 2.5 19 Q0.5 17.5 0.5 15 V8 Q0.5 5.5 2.5 3.8 Q7 0.5 12 0.5 Z" fill="#1565c8"/><path d="M2.5 5.8 L12 10.2 L21.5 5.8" fill="none" stroke="#f2f6fa" stroke-width="2"/><path d="M12 10.2 V23" stroke="#f2f6fa" stroke-width="2"/></svg></div>
<div class="t" style="left:259.00px;top:848.26px;font-size:16.00px;letter-spacing:-0.560px;color:#2b7db2;">OrderID_10</div>
<div class="t" style="left:415.00px;top:848.26px;font-size:16.00px;letter-spacing:0.000px;color:#404040;">Build &amp; Test</div>
<div class="t" style="left:537.00px;top:848.26px;font-size:16.00px;letter-spacing:0.062px;color:#404040;">Equipment Shipped</div>
<div class="t" style="left:783.50px;top:848.26px;font-size:16.00px;letter-spacing:0.042px;color:#404040;">ServIDData03</div>
<div class="t" style="left:918.50px;top:848.26px;font-size:16.00px;letter-spacing:-0.191px;color:#404040;">363 GOLD STRIP RENO NV, 23659</div>
<div class="t" style="left:1218.70px;top:848.26px;font-size:16.00px;letter-spacing:0.165px;color:#404040;">Product</div>
<svg class="r" style="left:1337px;top:842.8px" width="6" height="18" viewBox="0 0 6 18"><g fill="#4a4a4a"><circle cx="3" cy="3" r="2"/><circle cx="3" cy="9" r="2"/><circle cx="3" cy="15" r="2"/></g></svg>
<div class="r" style="left:169.5px;top:883.0px;width:24px;height:21px"><svg width="24" height="21" viewBox="0 0 24 21"><path d="M10.3 1.5 Q12 -1 13.7 1.5 L23.3 18 Q24 20.5 21.5 20.5 H2.5 Q0 20.5 0.7 18 Z" fill="#e0141e"/><rect x="10.6" y="6" width="2.8" height="7.5" rx="1" fill="#fff"/><circle cx="12" cy="16.5" r="1.6" fill="#fff"/></svg></div>
<div class="t" style="left:259.00px;top:892.26px;font-size:16.00px;letter-spacing:-0.552px;color:#2b7db2;">OrderID_11</div>
<div class="t" style="left:415.00px;top:892.26px;font-size:16.00px;letter-spacing:0.000px;color:#404040;">Build &amp; Test</div>
<div class="t" style="left:537.00px;top:892.26px;font-size:16.00px;letter-spacing:0.056px;color:#404040;">Network Configuration</div>
<div class="t" style="left:783.50px;top:892.26px;font-size:16.00px;letter-spacing:0.042px;color:#404040;">ServIDData08</div>
<div class="t" style="left:918.50px;top:892.26px;font-size:16.00px;letter-spacing:-0.070px;color:#404040;">456 CACTI LANE COSTAS NM, 87542</div>
<div class="t" style="left:1218.70px;top:892.26px;font-size:16.00px;letter-spacing:0.165px;color:#404040;">Product</div>
<svg class="r" style="left:1337px;top:886.4px" width="6" height="18" viewBox="0 0 6 18"><g fill="#4a4a4a"><circle cx="3" cy="3" r="2"/><circle cx="3" cy="9" r="2"/><circle cx="3" cy="15" r="2"/></g></svg>
<div class="r" style="left:144.50px;top:921.00px;width:1246.00px;height:44.00px;background:#f3f7fa;"></div>
<div class="r" style="left:174.5px;top:924.0px;width:14px;height:23px"><svg width="14" height="23" viewBox="0 0 14 23"><path d="M7 0.5 V4 M7 19 V22.5" stroke="#1565c8" stroke-width="2.6"/><path d="M11.8 6.8 Q11 3.8 7 3.8 Q2.4 3.8 2.4 7.2 Q2.4 10 7 11.2 Q11.8 12.5 11.8 15.8 Q11.8 19.2 7 19.2 Q2.6 19.2 2.1 16.2" fill="none" stroke="#1565c8" stroke-width="2.9"/></svg></div>
<div class="t" style="left:259.00px;top:936.26px;font-size:16.00px;letter-spacing:-0.560px;color:#2b7db2;">OrderID_12</div>
<div class="t" style="left:415.00px;top:936.26px;font-size:16.00px;letter-spacing:0.000px;color:#404040;">Activate</div>
<div class="t" style="left:537.00px;top:936.26px;font-size:16.00px;letter-spacing:0.061px;color:#404040;">Order Completed</div>
<div class="t" style="left:783.50px;top:936.26px;font-size:16.00px;letter-spacing:0.042px;color:#404040;">ServIDData64</div>
<div class="t" style="left:918.50px;top:936.26px;font-size:16.00px;letter-spacing:-0.135px;color:#404040;">76 BOND ST, PROVO UT, 65236</div>
<div class="t" style="left:1218.70px;top:936.26px;font-size:16.00px;letter-spacing:0.165px;color:#404040;">Product</div>
<svg class="r" style="left:1337px;top:930.0px" width="6" height="18" viewBox="0 0 6 18"><g fill="#4a4a4a"><circle cx="3" cy="3" r="2"/><circle cx="3" cy="9" r="2"/><circle cx="3" cy="15" r="2"/></g></svg>
<div class="r" style="left:169.5px;top:969.0px;width:24px;height:22px"><svg width="24" height="22" viewBox="0 0 24 22"><g fill="none" stroke="#1565c8" stroke-width="2.8"><rect x="-7.2" y="-4.6" width="14.4" height="9.2" rx="4.6" transform="translate(8.3 13.7) rotate(-45)"/><rect x="-7.2" y="-4.6" width="14.4" height="9.2" rx="4.6" transform="translate(15.7 8.3) rotate(-45)"/></g></svg></div>
<div class="t" style="left:259.00px;top:980.26px;font-size:16.00px;letter-spacing:-0.560px;color:#2b7db2;">OrderID_13</div>
<div class="t" style="left:415.00px;top:980.26px;font-size:16.00px;letter-spacing:0.000px;color:#404040;">Activate</div>
<div class="t" style="left:537.00px;top:980.26px;font-size:16.00px;letter-spacing:0.058px;color:#404040;">Service Ready/Testing Complete</div>
<div class="t" style="left:783.50px;top:980.26px;font-size:16.00px;letter-spacing:0.042px;color:#404040;">ServIDData84</div>
<div class="t" style="left:918.50px;top:980.26px;font-size:16.00px;letter-spacing:-0.346px;color:#404040;">1 RAIN BLVD SEATTLE WA, 56523</div>
<div class="t" style="left:1218.70px;top:980.26px;font-size:16.00px;letter-spacing:0.165px;color:#404040;">Product</div>
<svg class="r" style="left:1337px;top:973.6px" width="6" height="18" viewBox="0 0 6 18"><g fill="#4a4a4a"><circle cx="3" cy="3" r="2"/><circle cx="3" cy="9" r="2"/><circle cx="3" cy="15" r="2"/></g></svg>
<div class="r" style="left:144.50px;top:1005.00px;width:1238.00px;height:43.00px;background:#f7f7f7;"></div>
<div class="r" style="left:0.00px;top:1050.00px;width:1400.00px;height:59.00px;background:linear-gradient(180deg,rgba(235,235,235,0),rgba(235,235,235,0.85));-webkit-mask-image:linear-gradient(90deg,#000 0%,#000 75%,transparent 85%);"></div>
<div class="t" style="left:159.70px;top:1018.88px;font-size:15.50px;letter-spacing:-0.063px;color:#5b5b5b;">13 Results</div>
<div class="r" style="left:1141px;top:451.5px;width:190px;height:139.5px;background:#fff;box-shadow:0 1px 4px rgba(0,0,0,0.18);border-radius:2px;"></div>
<div class="r" style="left:1141.00px;top:451.50px;width:190.00px;height:34.50px;background:#e9ecef;"></div>
<div class="t" style="left:1150.00px;top:462.18px;font-size:15.50px;letter-spacing:0.420px;color:#444;">Update</div>
<div class="t" style="left:1150.00px;top:497.18px;font-size:15.50px;letter-spacing:0.000px;color:#444;">Cancel</div>
<div class="t" style="left:1150.00px;top:531.18px;font-size:15.50px;letter-spacing:0.411px;color:#444;">Marvel Specific Action?</div>
<div class="t" style="left:1150.00px;top:564.88px;font-size:15.50px;letter-spacing:0.411px;color:#444;">Marvel Specific Action?</div>
</body></html>
